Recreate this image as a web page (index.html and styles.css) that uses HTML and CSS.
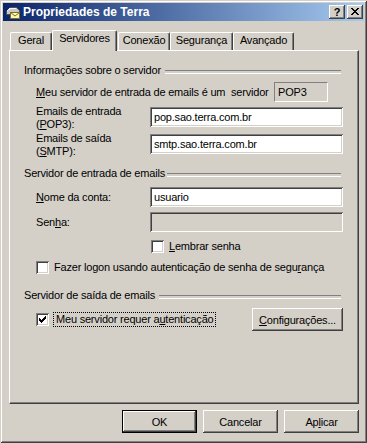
FILE: index.html
```html
<!DOCTYPE html>
<html lang="pt">
<head>
<meta charset="utf-8">
<title>Propriedades de Terra</title>
<link rel="stylesheet" href="styles.css">
</head>
<body>
<div class="window">
  <div class="titlebar">
    <svg class="appicon" width="16" height="16" viewBox="0 0 16 16" shape-rendering="crispEdges">
      <path d="M1.5 7.5 L5.5 3.5 H11.5 L14.5 6.5 V10.5 H1.5 Z" fill="#C8C8C8" stroke="#505050"/>
      <path d="M2 7 L6 4 H11" fill="none" stroke="#F4F4F4"/>
      <rect x="5.5" y="8.5" width="9" height="6" fill="#FFF6A8" stroke="#7A7030"/>
      <path d="M5.5 8.5 L10 12 L14.5 8.5" fill="none" stroke="#7A7030" shape-rendering="auto"/>
    </svg>
    <span class="title">Propriedades de Terra</span>
    <div class="tbtns">
      <span class="tbtn help">?</span>
      <span class="tbtn close">
        <svg width="8" height="7" viewBox="0 0 8 7" shape-rendering="crispEdges"><path d="M0 0h2v1h-2z M6 0h2v1h-2z M1 1h2v1h-2z M5 1h2v1h-2z M2 2h4v1h-4z M3 3h2v1h-2z M2 4h4v1h-4z M1 5h2v1h-2z M5 5h2v1h-2z M0 6h2v1h-2z M6 6h2v1h-2z" fill="#000"/></svg>
      </span>
    </div>
  </div>

  <div class="tabs">
    <div class="tab t-geral">Geral</div>
    <div class="tab sel t-serv">Servidores</div>
    <div class="tab t-con">Conexão</div>
    <div class="tab t-seg">Segurança</div>
    <div class="tab t-ava">Avançado</div>
  </div>

  <div class="panel">
    <div class="gh g1">Informações sobre o servidor</div>

    <div class="row pop">
      <span class="poplbl"><u>M</u>eu servidor de entrada de emails é um&nbsp; servidor</span>
      <span class="static">POP3</span>
    </div>

    <div class="row field r-in">
      <span class="lbl two">Emails de entrada<br>(<u>P</u>OP3):</span>
      <span class="inp">pop.sao.terra.com.br</span>
    </div>

    <div class="row field r-out">
      <span class="lbl two">Emails de saída<br>(<u>S</u>MTP):</span>
      <span class="inp">smtp.sao.terra.com.br</span>
    </div>

    <div class="gh g2">Servidor de entrada de emails</div>

    <div class="row field one r-nome">
      <span class="lbl"><u>N</u>ome da conta:</span>
      <span class="inp">usuario</span>
    </div>

    <div class="row field one r-senha">
      <span class="lbl">Sen<u>h</u>a:</span>
      <span class="inp disabled"></span>
    </div>

    <div class="row chk r-lembrar">
      <span class="cb"></span>
      <span class="cbl"><u>L</u>embrar senha</span>
    </div>

    <div class="row chk r-spa">
      <span class="cb"></span>
      <span class="cbl">Fazer logon usando autenticação de senha de segu<u>r</u>ança</span>
    </div>

    <div class="gh g3">Servidor de saída de emails</div>

    <div class="row r-auth">
      <span class="cb checked">
        <svg width="7" height="7" viewBox="0 0 7 7" shape-rendering="crispEdges"><path d="M6 0h1v1h-1z M5 1h2v1h-2z M0 2h1v1h-1z M4 2h3v1h-3z M0 3h2v1h-2z M3 3h3v1h-3z M0 4h5v1h-5z M1 5h3v1h-3z M2 6h1v1h-1z" fill="#000"/></svg>
      </span>
      <span class="focus">Meu servidor requer a<u>u</u>tenticação</span>
      <span class="btn cfg"><u>C</u>onfigurações...</span>
    </div>
  </div>

  <div class="buttons">
    <span class="btn default">OK</span>
    <span class="btn">Cancelar</span>
    <span class="btn">Ap<u>l</u>icar</span>
  </div>
</div>
</body>
</html>
```

FILE: styles.css
```css
* { box-sizing: border-box; }
html, body { margin: 0; padding: 0; }
body {
  background: #D4D0C8;
  font-family: "Liberation Sans", Arial, sans-serif;
  font-size: 11px;
  letter-spacing: -0.2px;
  color: #000;
}
u { text-decoration: underline; text-underline-offset: 1px; }

.window {
  width: 367px;
  height: 443px;
  padding: 3px;
  background: #D4D0C8;
  box-shadow: inset 1px 1px 0 #D4D0C8, inset -1px -1px 0 #404040,
              inset 2px 2px 0 #FFFFFF, inset -2px -2px 0 #808080;
}

/* title bar */
.titlebar {
  height: 18px;
  display: flex;
  align-items: center;
  background: linear-gradient(to right, #0A246A 0%, #A6CAF0 100%);
}
.appicon { margin-left: 2px; flex: none; }
.title {
  margin-left: 2px;
  color: #fff;
  font-weight: bold;
  font-size: 12px;
  letter-spacing: 0;
  white-space: nowrap;
}
.tbtns { margin-left: auto; display: flex; margin-right: 1px; }
.tbtn {
  width: 16px;
  height: 14px;
  display: flex;
  align-items: center;
  justify-content: center;
  background: #D4D0C8;
  letter-spacing: 0;
  box-shadow: inset -1px -1px 0 #404040, inset 1px 1px 0 #FFFFFF,
              inset -2px -2px 0 #808080, inset 2px 2px 0 #D4D0C8;
}
.tbtn.help { margin-right: 2px; font-weight: bold; font-size: 11px; line-height: 14px; padding-bottom: 1px; }
.tbtn.close svg { margin-top: -1px; }

/* tabs */
.tabs {
  margin-top: 9px;
  height: 20px;
  padding-left: 7px;
  display: flex;
  align-items: flex-end;
}
.tab {
  height: 18px;
  padding-top: 1px;
  line-height: 13px;
  text-align: center;
  white-space: nowrap;
  background: #D4D0C8;
  border-top: 1px solid #fff;
  border-left: 1px solid #fff;
  border-right: 1px solid #404040;
  border-top-left-radius: 2px;
  border-top-right-radius: 2px;
  box-shadow: inset -1px 0 0 #808080;
}
.tab.sel {
  height: 21px;
  margin-bottom: -1px;
  position: relative;
  z-index: 1;
}
.t-geral { width: 42px; }
.t-serv { width: 65px; }
.t-con { width: 52px; margin-left: 1px; }
.t-seg { width: 63px; }
.t-ava { width: 61px; }

/* panel */
.panel {
  width: 350px;
  height: 354px;
  margin-left: 6px;
  padding: 13px 15px 0 14px;
  border-top: 1px solid #fff;
  border-left: 1px solid #fff;
  border-right: 1px solid #404040;
  border-bottom: 1px solid #404040;
  box-shadow: inset -1px -1px 0 #808080;
}

.gh {
  display: flex;
  align-items: flex-start;
  height: 13px;
  line-height: 13px;
  white-space: nowrap;
}
.gh::after {
  content: "";
  flex: 1;
  height: 2px;
  margin-top: 6px;
  margin-left: 4px;
  margin-right: 2px;
  border-top: 1px solid #808080;
  border-bottom: 1px solid #fff;
}
.g2 { margin-top: 13px; }
.g2::after { margin-left: 2px; }
.g3 { margin-top: 15px; }

.row { display: flex; margin-left: 12px; white-space: nowrap; }

.pop { height: 20px; align-items: center; margin-top: 5px; }
.poplbl { width: 238px; }
.static {
  width: 54px;
  height: 20px;
  line-height: 18px;
  padding-left: 3px;
  border-top: 1px solid #808080;
  border-left: 1px solid #808080;
  border-right: 1px solid #fff;
  border-bottom: 1px solid #fff;
}

.field { height: 20px; }
.field.one { align-items: center; }
.lbl { width: 114px; line-height: 13px; }
.lbl.two { margin-top: -2px; }
.r-in { margin-top: 5px; }
.r-out { margin-top: 7px; }
.r-nome { margin-top: 7px; }
.r-senha { margin-top: 5px; }

.inp {
  width: 193px;
  height: 20px;
  line-height: 20px;
  padding-left: 4px;
  background: #fff;
  box-shadow: inset 1px 1px 0 #808080, inset -1px -1px 0 #fff,
              inset 2px 2px 0 #404040, inset -2px -2px 0 #D4D0C8;
}
.inp.disabled { background: #D4D0C8; }

.chk { height: 13px; align-items: center; }
.r-lembrar { margin-top: 8px; padding-left: 115px; }
.r-spa { margin-top: 8px; }
.cb {
  width: 13px;
  height: 13px;
  flex: none;
  background: #fff;
  display: flex;
  align-items: center;
  justify-content: center;
  box-shadow: inset 1px 1px 0 #808080, inset -1px -1px 0 #fff,
              inset 2px 2px 0 #404040, inset -2px -2px 0 #D4D0C8;
}
.cbl { margin-left: 5px; line-height: 13px; }

.r-auth { height: 23px; align-items: center; margin-top: 6px; }
.focus {
  margin-left: 4px;
  padding: 0 2px;
  line-height: 13px;
  border: 1px dotted #000;
}

.btn {
  display: flex;
  align-items: center;
  justify-content: center;
  width: 75px;
  height: 23px;
  background: #D4D0C8;
  box-shadow: inset -1px -1px 0 #404040, inset 1px 1px 0 #FFFFFF,
              inset -2px -2px 0 #808080, inset 2px 2px 0 #D4D0C8;
  white-space: nowrap;
}
.btn.cfg { margin-left: auto; width: 91px; }
.btn.default {
  border: 1px solid #000;
}

.buttons {
  display: flex;
  justify-content: flex-end;
  gap: 6px;
  margin-top: 6px;
  padding-right: 5px;
}
```
